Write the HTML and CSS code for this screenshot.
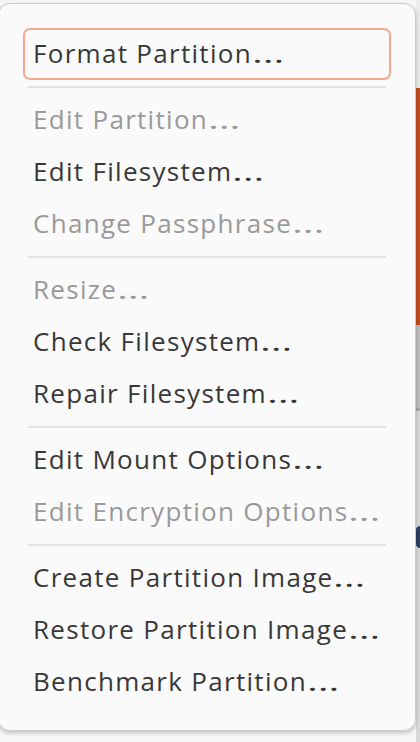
FILE: index.html
```html
<!DOCTYPE html>
<html lang="en">
<head>
<meta charset="utf-8">
<title>Partition menu</title>
<link rel="stylesheet" href="styles.css">
</head>
<body>
<div class="screen">
  <div class="menu">
    <div class="item focus">Format Partition<span class="dots">…</span></div>
    <div class="sep"></div>
    <div class="item disabled">Edit Partition<span class="dots">…</span></div>
    <div class="item">Edit Filesystem<span class="dots">…</span></div>
    <div class="item disabled">Change Passphrase<span class="dots">…</span></div>
    <div class="sep"></div>
    <div class="item disabled">Resize<span class="dots">…</span></div>
    <div class="item">Check Filesystem<span class="dots">…</span></div>
    <div class="item">Repair Filesystem<span class="dots">…</span></div>
    <div class="sep"></div>
    <div class="item">Edit Mount Options<span class="dots">…</span></div>
    <div class="item disabled">Edit Encryption Options<span class="dots">…</span></div>
    <div class="sep"></div>
    <div class="item">Create Partition Image<span class="dots">…</span></div>
    <div class="item">Restore Partition Image<span class="dots">…</span></div>
    <div class="item">Benchmark Partition<span class="dots">…</span></div>
  </div>
  <div class="strip">
    <div class="seg seg-light"></div>
    <div class="seg seg-orange"></div>
    <div class="seg seg-gray"></div>
    <div class="seg seg-line"></div>
    <div class="seg seg-pale1"></div>
    <div class="seg seg-blue"></div>
    <div class="seg seg-pale2"></div>
  </div>
</div>
</body>
</html>
```

FILE: styles.css
```css
html, body {
  margin: 0;
  padding: 0;
  background: #f6f6f6;
  overflow: hidden;
}

.screen {
  width: 420px;
  height: 742px;
  display: flex;
  align-items: flex-start;
  overflow: hidden;
}

.menu {
  flex: 0 0 auto;
  width: 418px;
  box-sizing: border-box;
  margin-left: -2px;
  margin-top: 3px;
  padding: 24px 24px 22px;
  background: #fafafa;
  border: 1px solid #cdcdcd;
  border-radius: 12px;
  box-shadow: 0 2px 4px rgba(0, 0, 0, 0.22);
  display: flex;
  flex-direction: column;
  position: relative;
  z-index: 1;
  font-family: "Open Sans", "Noto Sans", sans-serif;
  font-size: 26px;
  letter-spacing: 1.3px;
  word-spacing: 0px;
  color: #383838;
}

.item {
  height: 52px;
  display: flex;
  align-items: center;
  padding-left: 10px;
  padding-bottom: 3px;
  border-radius: 7px;
  white-space: pre;
  box-sizing: border-box;
}

.dots {
  display: inline-block;
  letter-spacing: 0;
  margin-left: 0;
  transform: scaleX(1.6);
  transform-origin: left center;
}

.item.focus {
  box-shadow: inset 0 0 0 2px #f4a88f;
}

.item.disabled {
  color: #999999;
}

.sep {
  height: 2px;
  margin: 6px 5px;
  background: #e2e2e2;
}

.strip {
  flex: 1 1 auto;
  height: 742px;
  display: flex;
  flex-direction: column;
}

.seg-light { height: 88px; background: #ececec; }
.seg-orange { height: 237px; background: #c24f1d; }
.seg-gray { height: 83px; background: #bdbdbd; }
.seg-line { height: 3px; background: #a6a6a6; }
.seg-pale1 { height: 115px; background: #d8d8d8; }
.seg-blue { height: 22px; background: #2f3f63; border-radius: 8px 0 0 8px; }
.seg-pale2 { flex: 1; background: #d8d8d8; }
```
